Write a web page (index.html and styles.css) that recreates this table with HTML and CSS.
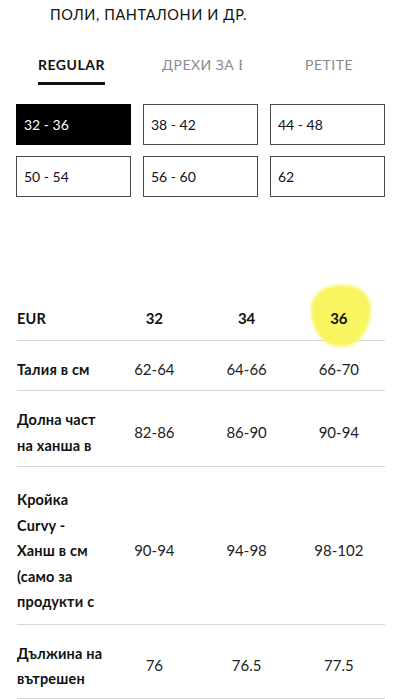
FILE: index.html
```html
<!DOCTYPE html>
<html lang="bg">
<head>
<meta charset="utf-8">
<link rel="stylesheet" href="styles.css">
</head>
<body>
<div class="page">
  <h1 class="title">ПОЛИ, ПАНТАЛОНИ И ДР.</h1>
  <nav class="tabs">
    <div class="tab active">REGULAR</div>
    <div class="tab clip">ДРЕХИ ЗА БРЕМ.</div>
    <div class="tab">PETITE</div>
  </nav>
  <div class="sizes">
    <div class="size selected">32 - 36</div>
    <div class="size">38 - 42</div>
    <div class="size">44 - 48</div>
    <div class="size">50 - 54</div>
    <div class="size">56 - 60</div>
    <div class="size">62</div>
  </div>
  <table class="chart">
    <colgroup><col class="c-label"><col class="c-val"><col class="c-val"><col class="c-val"></colgroup>
    <tr class="head">
      <td class="label">EUR</td>
      <td>32</td>
      <td>34</td>
      <td class="hl"><span class="blob"></span><span class="num">36</span></td>
    </tr>
    <tr>
      <td class="label">Талия в см</td>
      <td>62-64</td><td>64-66</td><td>66-70</td>
    </tr>
    <tr>
      <td class="label">Долна част<br>на ханша в</td>
      <td>82-86</td><td>86-90</td><td>90-94</td>
    </tr>
    <tr class="tall">
      <td class="label">Кройка<br>Curvy -<br>Ханш в см<br>(само за<br>продукти с</td>
      <td>90-94</td><td>94-98</td><td>98-102</td>
    </tr>
    <tr class="last">
      <td class="label">Дължина на<br>вътрешен</td>
      <td>76</td><td>76.5</td><td>77.5</td>
    </tr>
  </table>
</div>
</body>
</html>
```
FILE: styles.css
```css
html, body {
  margin: 0;
  padding: 0;
  background: #fff;
}
body {
  font-family: Lato, "Noto Sans", sans-serif;
  color: #111;
  width: 402px;
  height: 699px;
  overflow: hidden;
}
.title {
  margin: 0;
  padding: 7px 0 0 50px;
  font-size: 14.5px;
  line-height: 16px;
  font-weight: 400;
  letter-spacing: 0.6px;
  color: #111;
}
.tabs {
  display: grid;
  grid-template-columns: 124px 143px auto;
  padding-left: 38px;
  margin-top: 34px;
  align-items: start;
}
.tab {
  font-size: 14px;
  line-height: 16px;
  color: #8a8a8a;
  padding-bottom: 9px;
  border-bottom: 3px solid transparent;
  justify-self: start;
  letter-spacing: 0.5px;
}
.tab.active {
  color: #111;
  font-weight: 700;
  border-bottom-color: #111;
}
.tab.clip {
  width: 80px;
  overflow: hidden;
  white-space: nowrap;
}
.sizes {
  display: grid;
  grid-template-columns: repeat(3, 115px);
  gap: 11px 12px;
  padding: 0 16px;
  margin-top: 19px;
}
.size {
  box-sizing: border-box;
  height: 41px;
  border: 1.5px solid #4a4a4a;
  display: flex;
  align-items: center;
  padding-left: 7px;
  font-size: 14px;
  color: #111;
}
.size.selected {
  background: #000;
  border-color: #000;
  color: #fff;
}
.chart {
  margin: 101px 0 0 17px;
  width: 368px;
  border-collapse: collapse;
  table-layout: fixed;
}
.c-label { width: 91px; }
.c-val { width: 92px; }
.chart td {
  padding: 16px 0 8px;
  border-bottom: 1px solid #d6d6d6;
  font-size: 15px;
  line-height: 25.5px;
  text-align: center;
  vertical-align: middle;
  color: #222;
}
.chart td.label {
  text-align: left;
  font-weight: 700;
  font-size: 14.5px;
  letter-spacing: 0.2px;
  color: #111;
  white-space: nowrap;
}
.chart tr.head td {
  padding: 8px 0 8px;
  font-weight: 700;
  color: #111;
}
.chart tr.tall td {
  padding: 20px 0 9px;
}
.chart tr.last td {
  padding: 16px 0 6px;
}
.hl {
  position: relative;
}
.blob {
  position: absolute;
  left: 18px;
  top: -13px;
  width: 60px;
  height: 62px;
  background: #f8f560;
  border-radius: 48% 42% 50% 50% / 38% 40% 62% 60%;
  filter: blur(1.5px);
}
.num {
  position: relative;
}
```
